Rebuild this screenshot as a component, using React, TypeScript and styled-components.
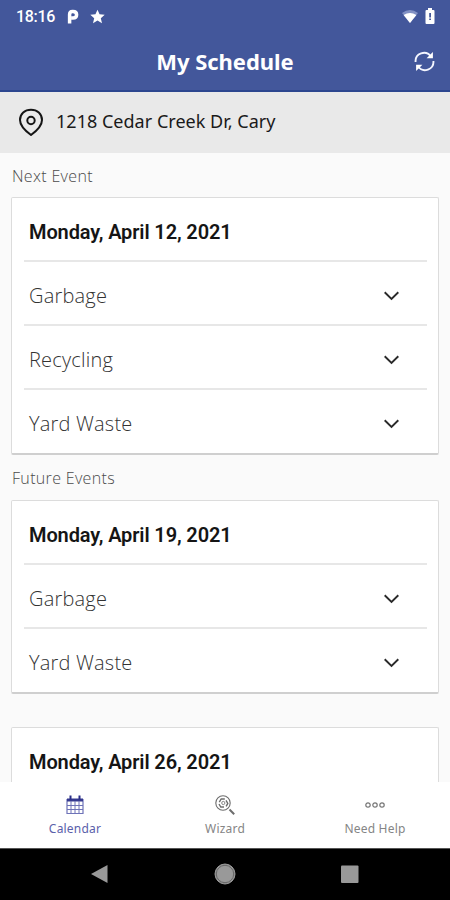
import React from "react";
import styled, { createGlobalStyle } from "styled-components";

const GlobalStyle = createGlobalStyle`
  * { box-sizing: border-box; }
  body { margin: 0; background: #fafafa; }
`;

const Screen = styled.div`
  width: 450px;
  height: 900px;
  display: flex;
  flex-direction: column;
  overflow: hidden;
  background: #fafafa;
  font-family: "Open Sans", "Noto Sans", sans-serif;
`;

const Header = styled.header`
  height: 92px;
  flex: none;
  background: #43579b;
  border-bottom: 2px solid #2c468f;
  color: #fff;
`;

const StatusBar = styled.div`
  height: 32px;
  padding: 0 15px 0 16px;
  display: flex;
  align-items: center;
  justify-content: space-between;
`;

const StatusGroup = styled.div<{ $gap: number }>`
  display: flex;
  align-items: center;
  gap: ${(p) => p.$gap}px;
`;

const Clock = styled.span`
  font: 500 16px/20px Roboto, sans-serif;
  letter-spacing: -0.3px;
  margin-top: 1px;
`;

const TitleBar = styled.div`
  height: 58px;
  padding: 1px 15px 0;
  display: grid;
  grid-template-columns: 21px 1fr 21px;
  align-items: center;
`;

const Title = styled.h1`
  margin: -2px 0 0;
  text-align: center;
  font: 700 22px/30px "Noto Sans", sans-serif;
  letter-spacing: -0.05px;
`;

const AddressBar = styled.div`
  height: 61px;
  flex: none;
  padding: 0 0 2px 18px;
  display: flex;
  align-items: center;
  gap: 12px;
  background: #e9e9e9;
  color: #1a1a1a;
`;

const Address = styled.span`
  font: 400 18px/26px "Noto Sans", sans-serif;
  letter-spacing: 0.02px;
  margin-top: -2px;
`;

const Schedule = styled.main`
  flex: 1;
  min-height: 0;
  overflow: hidden;
  padding: 0 11px;
`;

const SectionLabel = styled.h2<{ $height: number }>`
  margin: 0;
  height: ${(p) => p.$height}px;
  padding-left: 1px;
  font: 350 16px/46px "Open Sans", sans-serif;
  letter-spacing: 0.33px;
  color: #4a4a4a;
`;

const Card = styled.section<{ $after?: number }>`
  background: #fff;
  border: 1px solid #dcdcdc;
  border-bottom: 2px solid #cfcfcf;
  border-radius: 2px;
  padding: 0 11px 1px 12px;
  margin-bottom: ${(p) => p.$after ?? 0}px;
`;

const DateRow = styled.div`
  height: 63px;
  padding: 5px 0 0 5px;
  display: flex;
  align-items: center;
  font: 600 20px/28px Roboto, sans-serif;
  letter-spacing: -0.12px;
  color: #151515;
`;

const EventRow = styled.div`
  height: 64px;
  padding: 5px 27px 0 5px;
  border-top: 2px solid #e7e7e7;
  display: flex;
  align-items: center;
  justify-content: space-between;
  font: 350 20px/28px "Open Sans", sans-serif;
  letter-spacing: 0.2px;
  color: #333;

  ${DateRow} + & {
    margin-top: -1px;
  }
`;

const TabBar = styled.nav`
  height: 66px;
  flex: none;
  display: grid;
  grid-template-columns: repeat(3, 1fr);
  background: #fff;
`;

const Tab = styled.div<{ $active?: boolean }>`
  display: flex;
  flex-direction: column;
  align-items: center;
  padding-top: 13px;
  gap: 5px;
  font: 400 12px/18px "Noto Sans", sans-serif;
  letter-spacing: 0.2px;
  color: ${(p) => (p.$active ? "#5a60aa" : "#858585")};
`;

const SystemBar = styled.div`
  height: 52px;
  flex: none;
  display: flex;
  align-items: center;
  justify-content: space-between;
  padding: 0 90px 2px 89px;
  background: #000;
  border-top: 1px solid #555;
`;

const ParkingIcon = () => (
  <svg width="13" height="15" viewBox="0 0 13 15">
    <path d="M3.600 14.500V5.400Q3.600 2.400 6.500 2.400H7Q10.600 2.400 10.600 5.700T7 9H5.400" fill="none" stroke="#fff" strokeWidth="3.500" />
  </svg>
);

const StarIcon = () => (
  <svg width="15" height="15" viewBox="0 0 24 24">
    <path fill="#fff" d="M12 1l3.300 7.500 8.200.7-6.200 5.400 1.900 8L12 18.300l-7.200 4.300 1.900-8L.5 9.200l8.200-.7z" />
  </svg>
);

const WifiIcon = () => (
  <svg width="16" height="13" viewBox="0 0 16 13">
    <path d="M0 3Q8-3 16 3L8 13z" fill="#8291c4" />
    <path d="M1.600 5Q8 1 14.400 5L8 13z" fill="#fff" />
  </svg>
);

const BatteryIcon = () => (
  <svg width="10" height="16" viewBox="0 0 10 16">
    <path d="M3 0h4v2h1.500q1 0 1 1v12q0 1-1 1h-7q-1 0-1-1V3q0-1 1-1H3z" fill="#fff" />
    <path d="M4.200 5h1.800v4.500H4.200zM4.200 10.500h1.800v1.500H4.200z" fill="#43579b" />
  </svg>
);

const RefreshIcon = () => (
  <svg width="21" height="21" viewBox="0 0 20 20" fill="none" stroke="#f4f6ff" strokeWidth="1.800">
    <path d="M1.500 10.500A8 8 0 0 1 16 5.200M18.500 9.500A8 8 0 0 1 4 14.800" />
    <path d="M18 1v6h-6zM2 19v-6h6z" fill="#fff" stroke="none" />
  </svg>
);

const PinIcon = () => (
  <svg width="26" height="28" viewBox="0 0 26 28" fill="none" stroke="#151515" strokeWidth="2">
    <path d="M13 27Q2 19 2 12C2 5.500 6.800 1.700 13 1.700S24 5.500 24 12Q24 19 13 27z" />
    <circle cx="13" cy="12.500" r="3.700" />
  </svg>
);

const Chevron = () => (
  <svg width="16" height="10" viewBox="0 0 16 10">
    <path d="M0.700 1.300L7.500 8l6.800-6.700" fill="none" stroke="#2a2a2a" strokeWidth="1.900" />
  </svg>
);

const CalendarIcon = () => (
  <svg width="18" height="20" viewBox="0 0 18 20" fill="none" stroke="#6e73b8">
    <path d="M1 4.500h16v14H1z" strokeWidth="1.200" />
    <path d="M1 3.500h16v3H1z" fill="#35398f" stroke="none" />
    <path d="M4.500 0.500v4M13.500 0.500v4" stroke="#292d86" strokeWidth="2" />
    <path d="M1 10.500h16M1 14.500h16M5 6v12.500M9 6v12.500M13 6v12.500" />
  </svg>
);

const WizardIcon = () => (
  <svg width="20" height="20" viewBox="0 0 20 20" fill="none" stroke="#6d6d6d">
    <circle cx="8" cy="8" r="7.200" strokeWidth="1.100" />
    <path d="M4.300 7.200L6.200 4h3.600M11 5.300l1.800 3.100-1.700 2.900M9 12H5.800L4 9" strokeWidth="1.400" />
    <circle cx="8.300" cy="8" r="1.600" strokeWidth="0.800" />
    <path d="M14.500 14.500l4.700 4.700" strokeWidth="2" />
  </svg>
);

const MoreIcon = () => (
  <svg width="20" height="20" viewBox="0 0 20 20" fill="none" stroke="#777" strokeWidth="1.200">
    <circle cx="3" cy="10" r="2.200" />
    <circle cx="10" cy="10" r="2.200" />
    <circle cx="17" cy="10" r="2.200" />
  </svg>
);

const BackIcon = () => (
  <svg width="20" height="20" viewBox="0 0 20 20">
    <path d="M2 10L18.500 1v18z" fill="#999" />
  </svg>
);

const HomeIcon = () => (
  <svg width="22" height="22" viewBox="0 0 22 22">
    <circle cx="11" cy="11" r="10" fill="#999" stroke="#999" />
    <circle cx="11" cy="11" r="8.700" fill="none" stroke="#666" />
  </svg>
);

const RecentsIcon = () => (
  <svg width="20" height="20" viewBox="0 0 20 20">
    <rect x="1" y="1.500" width="17.500" height="17.500" rx="1" fill="#999" />
  </svg>
);

type DayProps = { date: string; events?: string[]; after?: number };

const Day = ({ date, events = [], after }: DayProps) => (
  <Card $after={after}>
    <DateRow>{date}</DateRow>
    {events.map((name) => (
      <EventRow key={name}>
        {name}
        <Chevron />
      </EventRow>
    ))}
  </Card>
);

export default function App() {
  return (
    <Screen>
      <GlobalStyle />
      <Header>
        <StatusBar>
          <StatusGroup $gap={11}>
            <Clock>18:16</Clock>
            <ParkingIcon />
            <StarIcon />
          </StatusGroup>
          <StatusGroup $gap={7}>
            <WifiIcon />
            <BatteryIcon />
          </StatusGroup>
        </StatusBar>
        <TitleBar>
          <span />
          <Title>My Schedule</Title>
          <RefreshIcon />
        </TitleBar>
      </Header>
      <AddressBar>
        <PinIcon />
        <Address>1218 Cedar Creek Dr, Cary</Address>
      </AddressBar>
      <Schedule>
        <SectionLabel $height={44}>Next Event</SectionLabel>
        <Day date="Monday, April 12, 2021" events={["Garbage", "Recycling", "Yard Waste"]} />
        <SectionLabel $height={45}>Future Events</SectionLabel>
        <Day date="Monday, April 19, 2021" events={["Garbage", "Yard Waste"]} after={33} />
        <Day date="Monday, April 26, 2021" />
      </Schedule>
      <TabBar>
        <Tab $active>
          <CalendarIcon />
          Calendar
        </Tab>
        <Tab>
          <WizardIcon />
          Wizard
        </Tab>
        <Tab>
          <MoreIcon />
          Need Help
        </Tab>
      </TabBar>
      <SystemBar>
        <BackIcon />
        <HomeIcon />
        <RecentsIcon />
      </SystemBar>
    </Screen>
  );
}
